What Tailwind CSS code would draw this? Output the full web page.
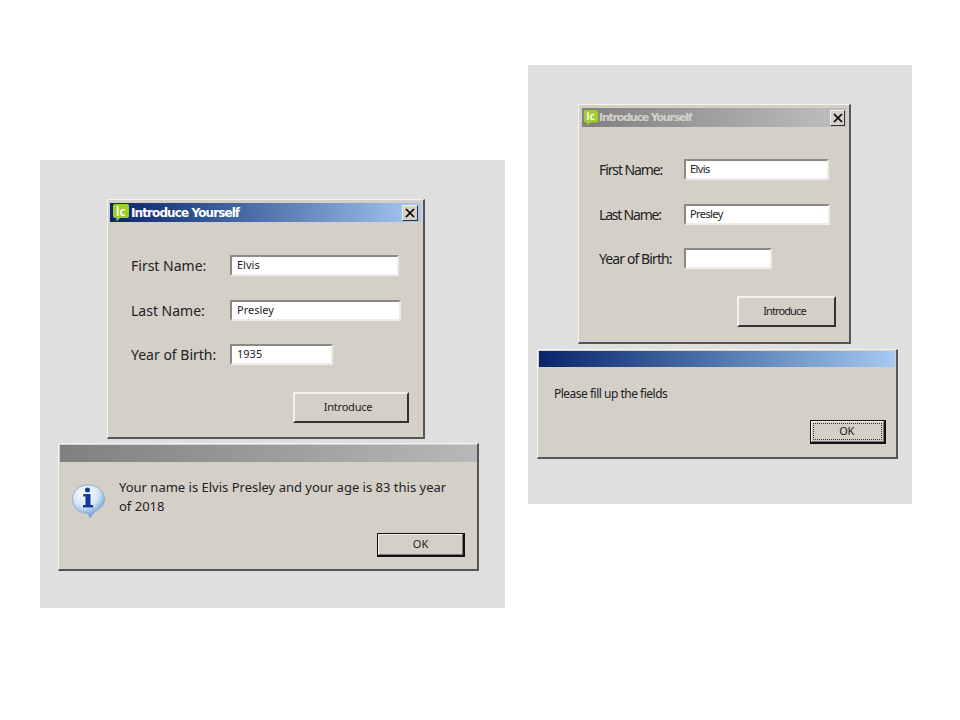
<!DOCTYPE html>
<html lang="en">
<head>
  <meta charset="UTF-8" />
  <title>Introduce Yourself</title>
  <script src="https://cdn.jsdelivr.net/npm/@tailwindcss/browser@4"></script>
</head>
<body class="bg-white">
  <div class="relative w-[960px] h-[720px] overflow-hidden font-['Noto_Sans',sans-serif] text-[#222]">

    <!-- Left panel -->
    <div class="absolute left-[40px] top-[160px] w-[465px] h-[448px] bg-[#dfdfdf]"></div>

    <!-- Left: form window -->
    <div class="absolute left-[107px] top-[199px] w-[318px] h-[240px] bg-[#d4d0c8] border border-[#f4f2ec] border-r-2 border-b-2 border-r-[#555] border-b-[#555] px-[2px] pt-[3px]">
      <div class="flex items-center h-[19px] bg-linear-to-r from-[#0a246a] to-[#a6caf0] pl-[2px] pr-[3px]">
        <svg width="18" height="19" viewBox="0 0 18 19" class="shrink-0">
          <path d="M3 1h12a2 2 0 0 1 2 2v10a2 2 0 0 1-2 2H8l-3.500 3.500V15H3a2 2 0 0 1-2-2V3a2 2 0 0 1 2-2z" fill="#9fce2a"/>
          <text x="4" y="12.500" font-family="Noto Sans" font-weight="600" font-size="12" fill="#fff">lc</text>
        </svg>
        <span class="ml-px text-[12px] leading-none font-bold text-white font-['DejaVu_Sans',sans-serif] tracking-[-0.9px]">Introduce Yourself</span>
        <div class="ml-auto flex items-center justify-center w-[16px] h-[16px] bg-[#d4d0c8] border border-[#f4f2ec] border-r-[#333] border-b-[#333]">
          <svg width="10" height="10" viewBox="0 0 10 10"><path d="M1 1l8 8M9 1l-8 8" stroke="#000" stroke-width="1.7"/></svg>
        </div>
      </div>
      <div class="mt-[33px] pl-[21px]">
        <div class="flex items-center h-[21px]">
          <span class="w-[99px] text-[14px]">First Name:</span>
          <div class="w-[169px] h-[21px] bg-white border-2 border-t-[#8c8a85] border-l-[#8c8a85] border-r-[#eeece6] border-b-[#eeece6] pl-[5px] text-[11px] leading-[16px]">Elvis</div>
        </div>
        <div class="flex items-center h-[21px] mt-[24px]">
          <span class="w-[99px] text-[14px]">Last Name:</span>
          <div class="w-[171px] h-[21px] bg-white border-2 border-t-[#8c8a85] border-l-[#8c8a85] border-r-[#eeece6] border-b-[#eeece6] pl-[5px] text-[11px] leading-[16px]">Presley</div>
        </div>
        <div class="flex items-center h-[21px] mt-[23px]">
          <span class="w-[99px] text-[14px]">Year of Birth:</span>
          <div class="w-[103px] h-[21px] bg-white border-2 border-t-[#8c8a85] border-l-[#8c8a85] border-r-[#eeece6] border-b-[#eeece6] pl-[5px] text-[11px] leading-[16px]">1935</div>
        </div>
      </div>
      <div class="flex justify-end pr-[12px] mt-[27px]">
        <div class="flex items-center justify-center w-[116px] h-[31px] pr-[6px] bg-[#d4d0c8] border-2 border-t-[#f4f2ec] border-l-[#f4f2ec] border-r-[#333] border-b-[#333] text-[11px] tracking-[-0.2px]">Introduce</div>
      </div>
    </div>

    <!-- Left: message dialog -->
    <div class="absolute left-[58px] top-[443px] w-[421px] h-[128px] bg-[#d4d0c8] border border-[#f4f2ec] border-r-2 border-b-2 border-r-[#555] border-b-[#555] pl-[1px] pt-[1px]">
      <div class="h-[17px] bg-linear-to-r from-[#808080] to-[#b8b8b8]"></div>
      <div class="flex mt-[16px] pl-[12px]">
        <svg width="35" height="36" viewBox="0 0 35 36" class="shrink-0 mt-[6px]">
          <defs>
            <radialGradient id="bubble" cx="0.4" cy="0.25" r="0.75">
              <stop offset="0" stop-color="#ffffff"/>
              <stop offset="0.55" stop-color="#d5e4f5"/>
              <stop offset="1" stop-color="#5f93d2"/>
            </radialGradient>
          </defs>
          <path d="M16.500 1C25.500 1 32.500 7 32.500 15C32.500 20.500 29 24.500 23.500 27L18 34L16 29.500C7.500 29.500 .5 23.500 .5 15C.5 7 7.500 1 16.500 1z" fill="url(#bubble)" stroke="#8fb0d8" stroke-width="1"/>
          <circle cx="15.500" cy="6" r="2.500" fill="#123a9c"/>
          <path d="M11.500 10h7v11h2.500v2.500h-10V21h2.500v-8.500h-2.500z" fill="#123a9c"/>
        </svg>
        <p class="ml-[12px] w-[340px] text-[13px] leading-[19px]">Your name is Elvis Presley and your age is 83 this year of 2018</p>
      </div>
      <div class="flex justify-end pr-[12px] mt-[13px]">
        <div class="w-[88px] h-[24px] bg-[#d4d0c8] border border-r-2 border-b-2 border-[#111]">
          <div class="flex items-center justify-center h-full border border-t-[#f4f2ec] border-l-[#f4f2ec] border-r-[#777] border-b-[#777] text-[11px]">OK</div>
        </div>
      </div>
    </div>

    <!-- Right panel -->
    <div class="absolute left-[528px] top-[65px] w-[384px] h-[439px] bg-[#dfdfdf]"></div>

    <!-- Right: form window -->
    <div class="absolute left-[578px] top-[104px] w-[273px] h-[240px] bg-[#d4d0c8] border border-[#f4f2ec] border-r-2 border-b-2 border-r-[#555] border-b-[#555] pl-[3px] pr-[3px] pt-[3px]">
      <div class="flex items-center h-[19px] bg-linear-to-r from-[#808080] to-[#c0c0c0] pl-[1px] pr-[1px]">
        <svg width="16" height="19" viewBox="0 0 18 19" class="shrink-0">
          <path d="M3 1h12a2 2 0 0 1 2 2v10a2 2 0 0 1-2 2H8l-3.500 3.500V15H3a2 2 0 0 1-2-2V3a2 2 0 0 1 2-2z" fill="#9fce2a"/>
          <text x="4" y="12.500" font-family="Noto Sans" font-weight="600" font-size="12" fill="#fff">lc</text>
        </svg>
        <span class="text-[11px] leading-none font-bold text-[#d4d0c8] font-['DejaVu_Sans',sans-serif] tracking-[-1.2px]">Introduce Yourself</span>
        <div class="ml-auto flex items-center justify-center w-[15px] h-[16px] bg-[#d4d0c8] border border-[#f4f2ec] border-r-[#333] border-b-[#333]">
          <svg width="10" height="10" viewBox="0 0 10 10"><path d="M1 1l8 8M9 1l-8 8" stroke="#000" stroke-width="1.7"/></svg>
        </div>
      </div>
      <div class="mt-[32px] pl-[17px]">
        <div class="flex items-center h-[21px]">
          <span class="w-[85px] text-[14px] tracking-[-1.1px]">First Name:</span>
          <div class="w-[145px] h-[21px] bg-white border-2 border-t-[#8c8a85] border-l-[#8c8a85] border-r-[#eeece6] border-b-[#eeece6] pl-[4px] text-[11px] leading-[16px] tracking-[-0.6px]">Elvis</div>
        </div>
        <div class="flex items-center h-[21px] mt-[24px]">
          <span class="w-[85px] text-[14px] tracking-[-1.2px]">Last Name:</span>
          <div class="w-[146px] h-[21px] bg-white border-2 border-t-[#8c8a85] border-l-[#8c8a85] border-r-[#eeece6] border-b-[#eeece6] pl-[4px] text-[11px] leading-[16px] tracking-[-0.6px]">Presley</div>
        </div>
        <div class="flex items-center h-[21px] mt-[23px]">
          <span class="w-[85px] text-[14px] tracking-[-0.9px]">Year of Birth:</span>
          <div class="w-[88px] h-[21px] bg-white border-2 border-t-[#8c8a85] border-l-[#8c8a85] border-r-[#eeece6] border-b-[#eeece6]"></div>
        </div>
      </div>
      <div class="flex justify-end pr-[10px] mt-[27px]">
        <div class="flex items-center justify-center w-[99px] h-[31px] pr-[4px] bg-[#d4d0c8] border-2 border-t-[#f4f2ec] border-l-[#f4f2ec] border-r-[#333] border-b-[#333] text-[11px] tracking-[-0.9px]">Introduce</div>
      </div>
    </div>

    <!-- Right: message dialog -->
    <div class="absolute left-[537px] top-[349px] w-[361px] h-[110px] bg-[#d4d0c8] border border-[#f4f2ec] border-r-2 border-b-2 border-r-[#555] border-b-[#555] px-[1px] pt-[1px]">
      <div class="h-[16px] bg-linear-to-r from-[#0a246a] to-[#a6caf0]"></div>
      <p class="mt-[18px] pl-[15px] text-[12px] leading-[18px] tracking-[-0.5px]">Please fill up the fields</p>
      <div class="flex justify-end pr-[9px] mt-[17px]">
        <div class="w-[76px] h-[24px] bg-[#d4d0c8] border border-r-2 border-b-2 border-[#111]">
          <div class="h-full border border-t-[#f4f2ec] border-l-[#f4f2ec] border-r-[#777] border-b-[#777] p-px">
            <div class="flex items-center justify-center h-full pr-[2px] border border-dotted border-[#333] text-[11px] tracking-[-0.4px]">OK</div>
          </div>
        </div>
      </div>
    </div>

  </div>
</body>
</html>
